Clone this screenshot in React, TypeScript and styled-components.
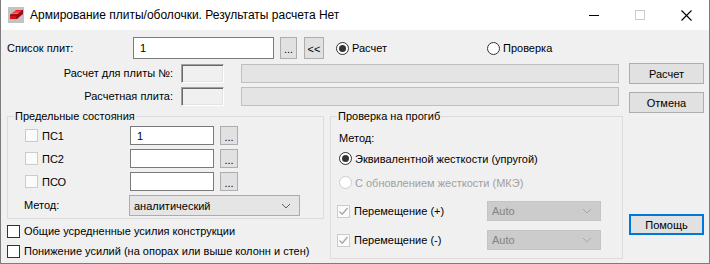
import styled, { createGlobalStyle } from 'styled-components';

const GlobalStyle = createGlobalStyle`
  html, body {
    margin: 0;
    padding: 0;
    background: #ffffff;
  }
  * {
    box-sizing: border-box;
  }
`

const UI_FONT = `"Liberation Sans", Arial, sans-serif`

const CheckMark = () => (
  <svg width="11" height="11" viewBox="0 0 11 11">
    <path d="M1.5 5.5 L4.2 8.2 L9.5 2" fill="none" stroke="#a6a6a6" strokeWidth="1.3" />
  </svg>
)

const Chevron = ({ color }: { color: string }) => (
  <svg width="10" height="6" viewBox="0 0 10 6">
    <path d="M1 1 L5 5 L9 1" fill="none" stroke={color} strokeWidth="1" />
  </svg>
)

const AppIcon = () => (
  <svg width="16" height="16" viewBox="0 0 16 16">
    <rect x="0" y="0" width="16" height="16" fill="#c3c3c3" />
    {/* верхняя грань */}
    <path d="M2 8 L8 3 L15 3 L9 8 Z" fill="#f01c24" />
    {/* передняя грань */}
    <path d="M2 8 L9 8 L9 12 L2 12 Z" fill="#d4101a" />
    {/* торец */}
    <path d="M9 8 L15 3 L15 7 L9 12 Z" fill="#a80a10" />
    <path d="M4 6.5 L11 6.5 M6 5 L13 5" stroke="#ff7a7a" strokeWidth="0.8" />
    <path d="M2 8 L9 8 L15 3 M9 8 L9 12" fill="none" stroke="#5a0606" strokeWidth="0.8" />
  </svg>
)

const App = () => {
  return (
    <Window>
      <GlobalStyle />
      <TitleBar>
        <IconSlot><AppIcon /></IconSlot>
        <TitleText>Армирование плиты/оболочки. Результаты расчета Нет</TitleText>
        <CaptionButton>
          <svg width="10" height="10" viewBox="0 0 10 10"><path d="M0 5.5 H10" stroke="#000" strokeWidth="1" /></svg>
        </CaptionButton>
        <CaptionButton>
          <svg width="10" height="10" viewBox="0 0 10 10"><rect x="0.5" y="0.5" width="9" height="9" fill="none" stroke="#cccccc" strokeWidth="1" /></svg>
        </CaptionButton>
        <CaptionButton>
          <svg width="11" height="11" viewBox="0 0 11 11"><path d="M0.5 0.5 L10.5 10.5 M10.5 0.5 L0.5 10.5" stroke="#000" strokeWidth="1.1" /></svg>
        </CaptionButton>
      </TitleBar>

      <Body>
        <MainCol>
          <Row $h={22}>
            <Label $w={126}>Список плит:</Label>
            <TextBox $w={141} $h={22}>1</TextBox>
            <SmallButton $w={17} $h={22} $ml={6}>...</SmallButton>
            <SmallButton $w={20} $h={22} $ml={7}>&lt;&lt;</SmallButton>
            <RadioItem $w={151} $ml={12}>
              <Radio $checked />
              <span>Расчет</span>
            </RadioItem>
            <RadioItem>
              <Radio />
              <span>Проверка</span>
            </RadioItem>
          </Row>

          <Row $h={19} $mt={5}>
            <Label $w={174} $right>Расчет для плиты №:</Label>
            <SunkenBox />
            <FlatBox $w={378} $ml={17} />
          </Row>
          <Row $h={19} $mt={4}>
            <Label $w={174} $right>Расчетная плита:</Label>
            <SunkenBox />
            <FlatBox $w={378} $ml={17} />
          </Row>

          <Lower>
            <LeftCol>
              <Group $w={317} $h={109}>
                <Legend>Предельные состояния</Legend>
                <LimitRows>
                  {['ПС1', 'ПС2', 'ПСО'].map((name, i) => (
                    <Row key={name} $h={19}>
                      <CheckCell $w={105}>
                        <Check $light />
                        <span>{name}</span>
                      </CheckCell>
                      <TextBox $w={84} $h={19}>{i === 0 ? '1' : ''}</TextBox>
                      <SmallButton $w={18} $h={19} $ml={6}>...</SmallButton>
                    </Row>
                  ))}
                  <Row $h={21}>
                    <Label $w={105} $ml={-1}>Метод:</Label>
                    <Combo $w={171} $h={21}>
                      <span>аналитический</span>
                      <Chevron color="#606060" />
                    </Combo>
                  </Row>
                </LimitRows>
              </Group>
              <BottomChecks>
                <CheckCell>
                  <Check />
                  <span>Общие усредненные усилия конструкции</span>
                </CheckCell>
                <CheckCell>
                  <Check />
                  <span>Понижение усилий (на опорах или выше колонн и стен)</span>
                </CheckCell>
              </BottomChecks>
            </LeftCol>

            <Group $w={293} $h={149}>
              <Legend>Проверка на прогиб</Legend>
              <DeflectionBody>
                <Label $mt={9}>Метод:</Label>
                <RadioItem $mt={7}>
                  <Radio $checked />
                  <span>Эквивалентной жесткости (упругой)</span>
                </RadioItem>
                <RadioItem $mt={11} $disabled>
                  <Radio $disabled />
                  <span>С обновлением жесткости (МКЭ)</span>
                </RadioItem>
                <Row $h={20} $mt={12} $ml={-2}>
                  <CheckCell $w={150}>
                    <Check $light $checked><CheckMark /></Check>
                    <span>Перемещение (+)</span>
                  </CheckCell>
                  <Combo $w={114} $h={20} $disabled>
                    <span>Auto</span>
                    <Chevron color="#a8a8a8" />
                  </Combo>
                </Row>
                <Row $h={20} $mt={9} $ml={-2}>
                  <CheckCell $w={150}>
                    <Check $light $checked><CheckMark /></Check>
                    <span>Перемещение (-)</span>
                  </CheckCell>
                  <Combo $w={114} $h={20} $disabled>
                    <span>Auto</span>
                    <Chevron color="#a8a8a8" />
                  </Combo>
                </Row>
              </DeflectionBody>
            </Group>
          </Lower>
        </MainCol>

        <ButtonCol>
          <PushButton $mt={26}>Расчет</PushButton>
          <PushButton $mt={8}>Отмена</PushButton>
          <PushButton $mt={101} $default>Помощь</PushButton>
        </ButtonCol>
      </Body>
    </Window>
  )
}

export default App;

const Window = styled.div`
  width: 710px;
  height: 264px;
  border: 1px solid #7c7c7c;
  border-top: none;
  background: #f0f0f0;
  display: flex;
  flex-direction: column;
  font-family: ${UI_FONT};
  font-size: 11px;
  color: #000;
`
const TitleBar = styled.div`
  height: 30px;
  background: #ffffff;
  display: flex;
  align-items: center;
  flex-shrink: 0;
`
const IconSlot = styled.div`
  width: 16px;
  height: 16px;
  margin-left: 7px;
  display: flex;
`
const TitleText = styled.div`
  margin-left: 6px;
  flex: 1;
  font-size: 12px;
  white-space: nowrap;
`
const CaptionButton = styled.div`
  width: 46px;
  height: 30px;
  display: flex;
  align-items: center;
  justify-content: center;
`
const Body = styled.div`
  flex: 1;
  display: flex;
  padding: 7px 0 0 6px;
`
const MainCol = styled.div`
  width: 616px;
  display: flex;
  flex-direction: column;
`
const ButtonCol = styled.div`
  margin-left: 6px;
  width: 75px;
  display: flex;
  flex-direction: column;
`
const Row = styled.div<{ $h: number; $mt?: number; $ml?: number }>`
  display: flex;
  align-items: center;
  height: ${p => p.$h}px;
  margin-top: ${p => p.$mt ?? 0}px;
  margin-left: ${p => p.$ml ?? 0}px;
`
const Label = styled.div<{ $w?: number; $right?: boolean; $ml?: number; $mt?: number }>`
  width: ${p => (p.$w ? `${p.$w}px` : 'auto')};
  flex-shrink: 0;
  text-align: ${p => (p.$right ? 'right' : 'left')};
  padding-right: ${p => (p.$right ? 8 : 0)}px;
  margin-left: ${p => p.$ml ?? 0}px;
  margin-top: ${p => p.$mt ?? 0}px;
  line-height: 13px;
  white-space: nowrap;
`
const TextBox = styled.div<{ $w: number; $h: number }>`
  width: ${p => p.$w}px;
  height: ${p => p.$h}px;
  flex-shrink: 0;
  background: #ffffff;
  border: 1px solid #7a7a7a;
  padding-left: 6px;
  display: flex;
  align-items: center;
`
const SmallButton = styled.div<{ $w: number; $h: number; $ml?: number }>`
  width: ${p => p.$w}px;
  height: ${p => p.$h}px;
  margin-left: ${p => p.$ml ?? 0}px;
  flex-shrink: 0;
  background: #e1e1e1;
  border: 1px solid #adadad;
  display: flex;
  align-items: center;
  justify-content: center;
  font-size: 11px;
  padding-top: 2px;
`
const SunkenBox = styled.div`
  width: 43px;
  height: 19px;
  flex-shrink: 0;
  background: #f0f0f0;
  border-top: 1px solid #a0a0a0;
  border-left: 1px solid #a0a0a0;
  border-right: 1px solid #ffffff;
  border-bottom: 1px solid #ffffff;
  box-shadow: inset 1px 1px 0 #696969, inset -1px -1px 0 #e3e3e3;
`
const FlatBox = styled.div<{ $w: number; $ml?: number }>`
  width: ${p => p.$w}px;
  height: 19px;
  margin-left: ${p => p.$ml ?? 0}px;
  flex-shrink: 0;
  background: #e4e4e4;
  border: 1px solid #bfbfbf;
`
const RadioItem = styled.div<{ $w?: number; $ml?: number; $mt?: number; $disabled?: boolean }>`
  display: flex;
  align-items: center;
  gap: 3px;
  width: ${p => (p.$w ? `${p.$w}px` : 'auto')};
  margin-left: ${p => p.$ml ?? 0}px;
  margin-top: ${p => p.$mt ?? 0}px;
  height: 13px;
  color: ${p => (p.$disabled ? '#a0a0a0' : '#000')};
  white-space: nowrap;
`
const Radio = styled.span<{ $checked?: boolean; $disabled?: boolean }>`
  width: 13px;
  height: 13px;
  flex-shrink: 0;
  border-radius: 50%;
  border: 1px solid ${p => (p.$disabled ? '#cccccc' : '#333333')};
  background: #ffffff;
  display: flex;
  align-items: center;
  justify-content: center;
  &::after {
    content: '';
    display: ${p => (p.$checked ? 'block' : 'none')};
    width: 7px;
    height: 7px;
    border-radius: 50%;
    background: #333333;
  }
`
const Check = styled.span<{ $checked?: boolean; $light?: boolean }>`
  width: 13px;
  height: 13px;
  flex-shrink: 0;
  border: 1px solid ${p => (p.$light ? '#cccccc' : '#333333')};
  background: ${p => (p.$light ? '#fbfbfb' : '#ffffff')};
  display: flex;
  align-items: center;
  justify-content: center;
  & > svg {
    display: ${p => (p.$checked ? 'block' : 'none')};
  }
`
const CheckCell = styled.div<{ $w?: number }>`
  display: flex;
  align-items: center;
  gap: 4px;
  width: ${p => (p.$w ? `${p.$w}px` : 'auto')};
  flex-shrink: 0;
  white-space: nowrap;
  height: 14px;
`
const Combo = styled.div<{ $w: number; $h: number; $disabled?: boolean }>`
  width: ${p => p.$w}px;
  height: ${p => p.$h}px;
  flex-shrink: 0;
  background: ${p => (p.$disabled ? '#cccccc' : '#e5e5e5')};
  border: 1px solid ${p => (p.$disabled ? '#c4c4c4' : '#acacac')};
  color: ${p => (p.$disabled ? '#838383' : '#000')};
  display: flex;
  align-items: center;
  justify-content: space-between;
  padding: 0 8px 0 4px;
`
const Lower = styled.div`
  display: flex;
  gap: 6px;
  margin-top: 4px;
`
const LeftCol = styled.div`
  display: flex;
  flex-direction: column;
`
const Group = styled.fieldset<{ $w: number; $h: number }>`
  width: ${p => p.$w}px;
  height: ${p => p.$h}px;
  margin: 0;
  padding: 0;
  border: 1px solid #dcdcdc;
  min-width: 0;
`
const Legend = styled.legend`
  margin-left: 6px;
  padding: 0 1px;
  line-height: 13px;
  font-size: 11px;
`
const LimitRows = styled.div`
  display: flex;
  flex-direction: column;
  gap: 4px;
  padding: 3px 0 0 17px;
`
const BottomChecks = styled.div`
  display: flex;
  flex-direction: column;
  gap: 6px;
  margin-top: 5px;
`
const DeflectionBody = styled.div`
  display: flex;
  flex-direction: column;
  align-items: flex-start;
  padding-left: 8px;
`
const PushButton = styled.div<{ $mt: number; $default?: boolean }>`
  width: 75px;
  height: 21px;
  margin-top: ${p => p.$mt}px;
  background: #e1e1e1;
  border: ${p => (p.$default ? '2px solid #0078d7' : '1px solid #adadad')};
  display: flex;
  align-items: center;
  justify-content: center;
`
